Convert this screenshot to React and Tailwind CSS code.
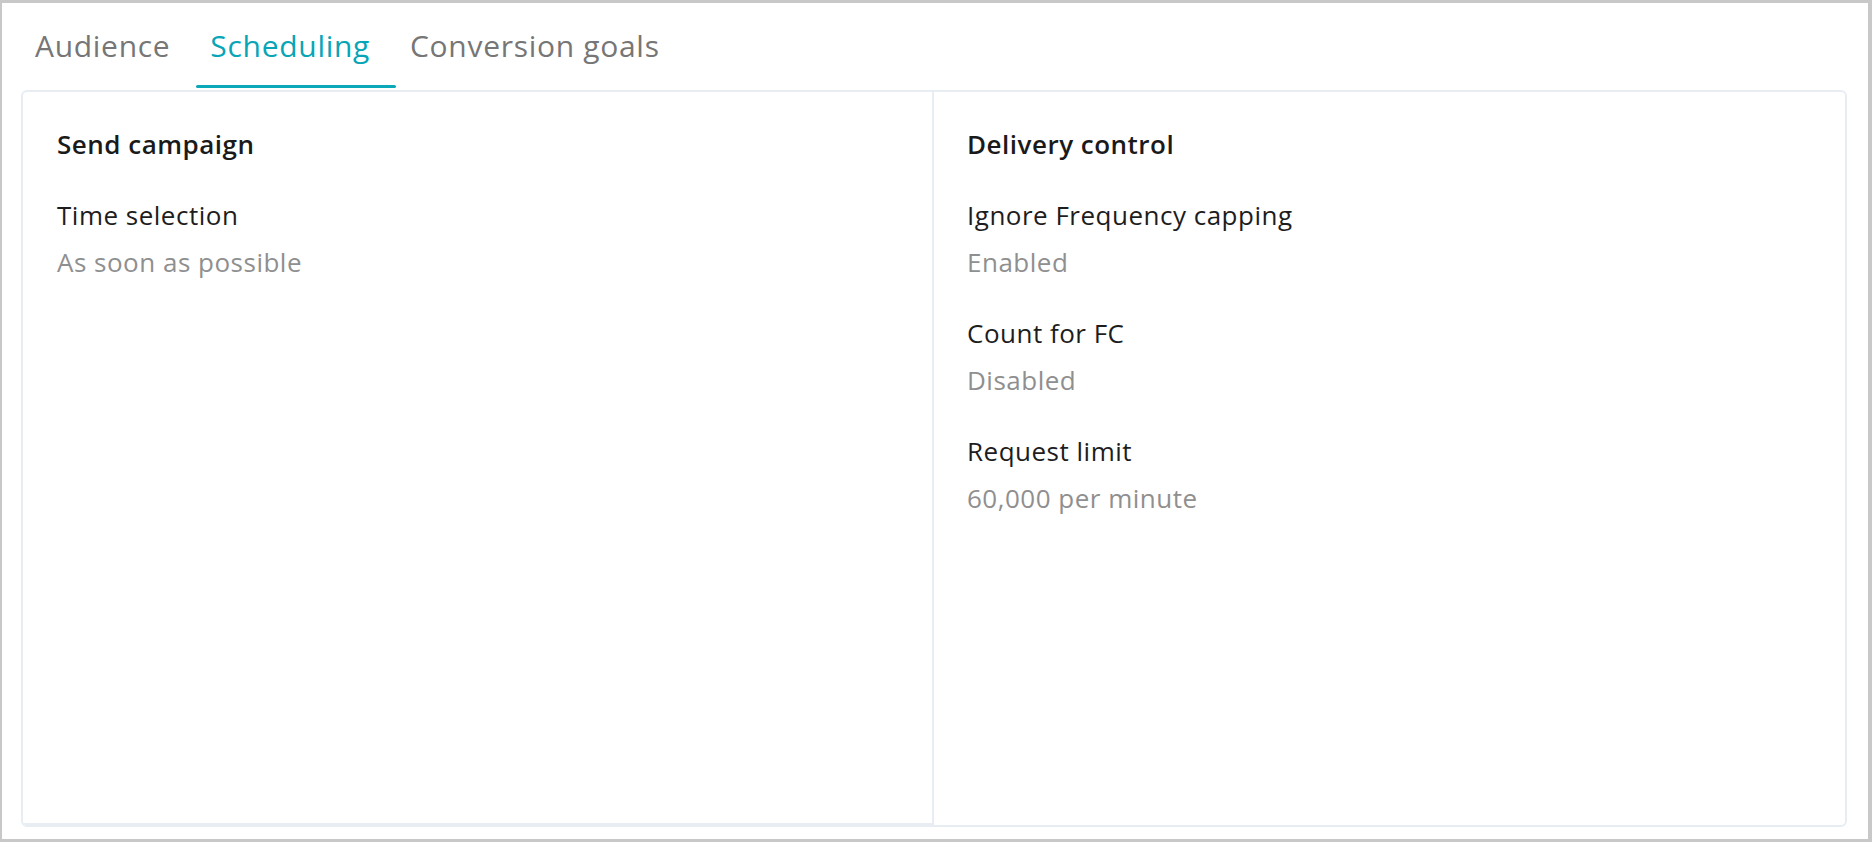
import { useState } from "react";

const tabs = ["Audience", "Scheduling", "Conversion goals"];

const Field = ({ label, value }) => (
  <div className="mt-[35px]">
    <div className="text-[26px] leading-9 tracking-[0.5px] text-[#1d1d1d]">{label}</div>
    <div className="mt-[11px] text-[26px] leading-9 tracking-[0.5px] text-[#8f8f8f]">{value}</div>
  </div>
);

const App = () => {
  const [activeTab, setActiveTab] = useState(1);

  return (
    <div
      className="h-[842px] w-full flex flex-col bg-white border-l-2 border-t-[3px] border-r-4 border-b-[3px] border-[#c8c8c8]"
      style={{ fontFamily: '"Open Sans", "Noto Sans", sans-serif' }}
    >
      <div className="flex ml-[19px]">
        {tabs.map((tab, index) => (
          <button
            key={tab}
            onClick={() => setActiveTab(index)}
            className="flex flex-col pt-[23px] cursor-pointer"
          >
            <span
              className={`pl-[14px] pr-[26px] text-[30px] leading-10 tracking-[0.7px] whitespace-nowrap ${
                index == activeTab ? "text-[#08a5b7]" : "text-[#767676]"
              }`}
            >
              {tab}
            </span>
            <span
              className={`mt-[19px] h-[3px] w-full rounded-full ${
                index == activeTab ? "bg-[#0aa8b9]" : "bg-transparent"
              }`}
            />
          </button>
        ))}
      </div>

      <div className="flex-1 mt-[2px] mb-[12px] ml-[19px] mr-[21px] grid grid-cols-2 border-2 border-[#e8edf4] rounded-md overflow-hidden">
        <div className="border-r-2 border-b-2 border-[#e8edf4] px-[34px] pt-[34px]">
          <div className="text-[26px] leading-9 tracking-[0.5px] font-semibold text-[#1a1a1a]">
            Send campaign
          </div>
          <Field label="Time selection" value="As soon as possible" />
        </div>
        <div className="px-[33px] pt-[34px]">
          <div className="text-[26px] leading-9 tracking-[0.5px] font-semibold text-[#1a1a1a]">
            Delivery control
          </div>
          <Field label="Ignore Frequency capping" value="Enabled" />
          <Field label="Count for FC" value="Disabled" />
          <Field label="Request limit" value="60,000 per minute" />
        </div>
      </div>
    </div>
  );
};

export default App;
